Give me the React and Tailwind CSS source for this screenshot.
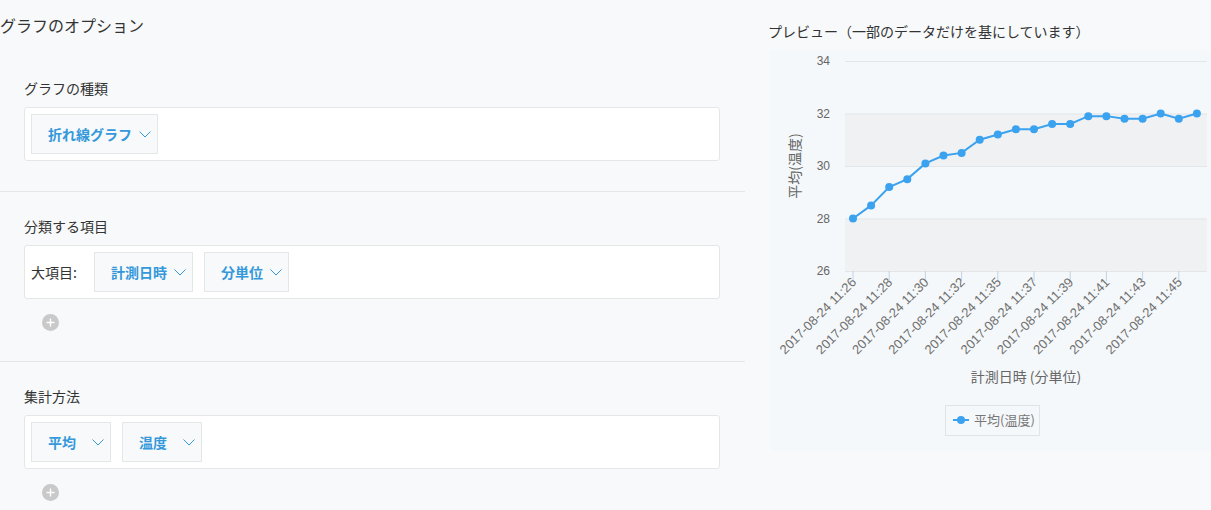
import React from 'react';

const data = [28.0, 28.5, 29.2, 29.5, 30.1, 30.4, 30.5, 31.0, 31.2, 31.4, 31.4, 31.6, 31.6, 31.9, 31.9, 31.8, 31.8, 32.0, 31.8, 32.0];
const times = ['11:26', '11:28', '11:30', '11:32', '11:35', '11:37', '11:39', '11:41', '11:43', '11:45'];
const BLUE = '#3ba2ef';

const yOf = (v) => 221 - (v - 26) * 26.25;
const xOf = (i) => 83 + i * 18.1;

function Chevron() {
  return (
    <svg width="12" height="7" viewBox="0 0 12 7" className="shrink-0">
      <polyline points="0.5,0.5 6,6 11.5,0.5" fill="none" stroke="#3498db" strokeWidth="1" />
    </svg>
  );
}

function Dropdown({ label, wide }) {
  return (
    <div className={`flex h-[40px] items-center justify-between gap-[7px] border border-[#e3e7e8] bg-[#f7f9fa] pl-[16px] pr-[6px] ${wide ? 'min-w-[80px]' : ''}`}>
      <span className="text-[14px] font-bold text-[#3498db]">{label}</span>
      <Chevron />
    </div>
  );
}

function Box({ children }) {
  return (
    <div className="flex items-center gap-[11px] rounded-[3px] border border-[#e3e7e8] bg-white p-[6px]">
      {children}
    </div>
  );
}

function AddButton() {
  return (
    <div className="ml-[18px] mt-[15px] flex h-[17px] w-[17px] items-center justify-center rounded-full bg-[#c9c9c9]">
      <svg width="9" height="9" viewBox="0 0 9 9">
        <path d="M4.5 0.5v8M0.5 4.5h8" stroke="white" strokeWidth="1.4" />
      </svg>
    </div>
  );
}

function Chart() {
  const line = data.map((v, i) => `${xOf(i)},${yOf(v)}`).join(' ');
  return (
    <svg width="437" height="400" className="block font-['Liberation_Sans',sans-serif]">
      <rect x="75" y={yOf(28)} width="362" height={yOf(26) - yOf(28)} fill="#f0f1f3" />
      <rect x="75" y={yOf(32)} width="362" height={yOf(30) - yOf(32)} fill="#f0f1f3" />
      {[26, 28, 30, 32, 34].map((v) => (
        <g key={v}>
          <line x1="75" x2="437" y1={yOf(v) + 0.5} y2={yOf(v) + 0.5} stroke="#e2e6e9" />
          <text x="60" y={yOf(v) + 4} textAnchor="end" fontSize="12" fill="#666">{v}</text>
        </g>
      ))}
      {times.map((t, k) => {
        const x = xOf(k * 2);
        return (
          <g key={t}>
            <line x1={x} x2={x} y1="221" y2="231" stroke="#c4d2e4" />
            <text
              x={x + 4}
              y="233"
              textAnchor="end"
              fontSize="13"
              fill="#707070"
              transform={`rotate(-45 ${x + 4} 233)`}
            >
              2017-08-24 {t}
            </text>
          </g>
        );
      })}
      <polyline points={line} fill="none" stroke={BLUE} strokeWidth="2" />
      {data.map((v, i) => (
        <circle key={i} cx={xOf(i)} cy={yOf(v)} r="4" fill={BLUE} />
      ))}
      <text x="25" y="116" textAnchor="middle" fontSize="14" fill="#666" transform="rotate(-90 25 116)" dy="5" className="font-['Noto_Sans_CJK_JP',sans-serif]">
        平均(温度)
      </text>
      <text x="256" y="332" textAnchor="middle" fontSize="14" fill="#666" className="font-['Noto_Sans_CJK_JP',sans-serif]">
        計測日時 (分単位)
      </text>
      <rect x="175.5" y="355.5" width="94" height="30" fill="none" stroke="#e0e4e7" />
      <line x1="183" x2="199" y1="370" y2="370" stroke={BLUE} strokeWidth="2" />
      <circle cx="191" cy="370" r="4" fill={BLUE} />
      <text x="204" y="375" fontSize="13" fill="#777" className="font-['Noto_Sans_CJK_JP',sans-serif]">
        平均(温度)
      </text>
    </svg>
  );
}

export default function App() {
  return (
    <div className="flex h-[510px] w-[1211px] overflow-hidden bg-[#f7f9fa] font-['Noto_Sans_CJK_JP',sans-serif] text-[#333]">
      <div className="w-[745px] shrink-0">
        <div className="h-[54px] pt-[13px] text-[16px] leading-[24px]">グラフのオプション</div>

        <div className="border-b border-[#e3e7e8] pb-[30px] pl-[24px] pr-[25px] pt-[24px]">
          <div className="mb-[9px] text-[14px] leading-[20px]">グラフの種類</div>
          <Box>
            <Dropdown label="折れ線グラフ" />
          </Box>
        </div>

        <div className="border-b border-[#e3e7e8] pb-[30px] pl-[24px] pr-[25px] pt-[24px]">
          <div className="mb-[9px] text-[14px] leading-[20px]">分類する項目</div>
          <Box>
            <span className="w-[52px] text-[14px]">大項目:</span>
            <Dropdown label="計測日時" />
            <Dropdown label="分単位" />
          </Box>
          <AddButton />
        </div>

        <div className="pl-[24px] pr-[25px] pt-[24px]">
          <div className="mb-[9px] text-[14px] leading-[20px]">集計方法</div>
          <Box>
            <Dropdown label="平均" wide />
            <Dropdown label="温度" wide />
          </Box>
          <AddButton />
        </div>
      </div>

      <div className="flex-1 pl-[23px] pt-[21px]">
        <div className="text-[14px] leading-[20px]">プレビュー（一部のデータだけを基にしています）</div>
        <div className="ml-[2px] mt-[9px] h-[401px] bg-[#f5f8fa]">
          <Chart />
        </div>
      </div>
    </div>
  );
}
